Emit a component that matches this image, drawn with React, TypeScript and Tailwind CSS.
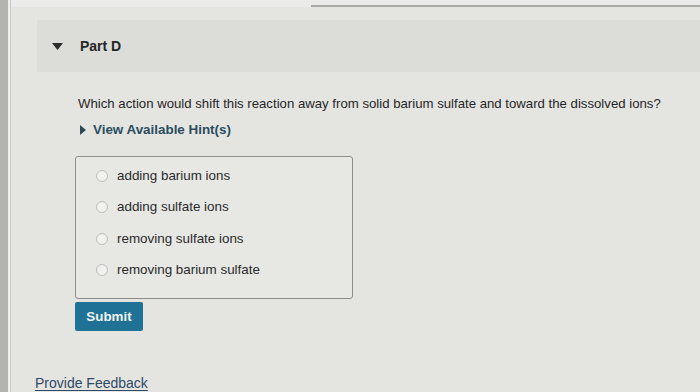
import React from "react";

const choices = [
  "adding barium ions",
  "adding sulfate ions",
  "removing sulfate ions",
  "removing barium sulfate",
];

const App = () => {
  return (
    <div
      className="flex w-[700px] h-[392px] overflow-hidden bg-[#e4e4e1] text-[#2b2b2b]"
      style={{ fontFamily: '"Liberation Sans", Arial, sans-serif' }}
    >
      {/* left edge of the window */}
      <div className="w-[8px] shrink-0 bg-[#b3b3b0]" />
      <div className="w-[2px] shrink-0 bg-[#eeeeec]" />
      <div className="w-[1px] shrink-0 bg-[#c9c9c6]" />

      <div className="flex flex-1 flex-col">
        {/* top divider */}
        <div className="flex h-[7px] shrink-0 bg-[#ebebe9]">
          <div className="w-[300px]" />
          <div className="flex-1 border-b-2 border-[#a9a9a6]" />
        </div>

        {/* Part header */}
        <div className="mt-[13px] ml-[26px] flex h-[52px] shrink-0 items-center bg-[#dcdcd9]">
          <svg className="ml-[15px]" width="11" height="7" viewBox="0 0 11 7">
            <path d="M0 0 L11 0 L5.5 7 Z" fill="#2d2d2d" />
          </svg>
          <span className="ml-[17px] text-[14px] font-bold text-[#262626]">Part D</span>
        </div>

        {/* question */}
        <p className="mt-[23px] ml-[67px] shrink-0 text-[13.2px] leading-[18px] text-[#262626]">
          Which action would shift this reaction away from solid barium sulfate and toward the dissolved ions?
        </p>

        {/* hints */}
        <div className="mt-[7px] ml-[69px] flex shrink-0 items-center">
          <svg width="6" height="10" viewBox="0 0 6 10">
            <path d="M0 0 L6 5 L0 10 Z" fill="#2a4a58" />
          </svg>
          <span className="ml-[7px] text-[13.4px] font-bold text-[#2a4d5e]">View Available Hint(s)</span>
        </div>

        {/* choices */}
        <div className="mt-[16px] ml-[64px] flex h-[143px] w-[278px] shrink-0 flex-col rounded-[3px] border border-[#8d8d8b] bg-[#e7e7e4] pt-[3px] pl-[20px]">
          {choices.map((c) => (
            <div key={c} className="flex h-[31.5px] shrink-0 items-center">
              <span className="h-[12px] w-[12px] rounded-full border border-[#bdbdba] bg-[#f1f1ef]" />
              <span className="ml-[9px] text-[13.4px] text-[#2b2b2b]">{c}</span>
            </div>
          ))}
        </div>

        {/* submit */}
        <div className="mt-[3px] ml-[64px] shrink-0">
          <button className="h-[29px] w-[68px] rounded-[2px] bg-[#1f7196] text-[13.4px] font-bold text-[#eef4f6]">
            Submit
          </button>
        </div>

        {/* feedback */}
        <a className="mt-[42px] ml-[24px] shrink-0 text-[14px] text-[#2f4a66] underline underline-offset-2">
          Provide Feedback
        </a>
      </div>
    </div>
  );
};

export default App;
